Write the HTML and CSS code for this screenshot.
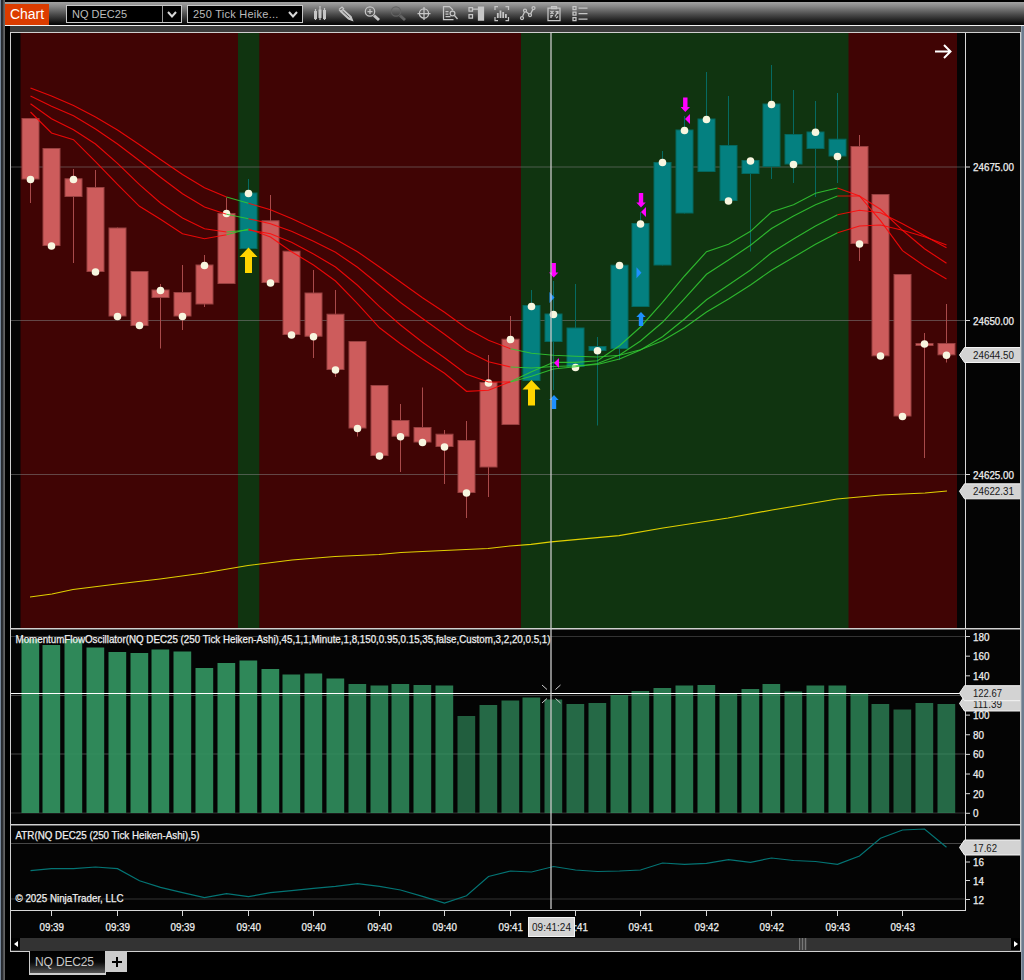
FILE: index.html
```html
<!DOCTYPE html>
<html lang="en">
<head>
  <meta charset="UTF-8">
  <meta name="viewport" content="width=device-width, initial-scale=1.0">
  <title>Chart - NQ DEC25</title>
  <link rel="stylesheet" href="styles.css">
</head>
<body>
  <div class="window">
    <div class="toolbar">
      <div class="app-tab">Chart</div>
      <div class="select instrument">
        <span>NQ DEC25</span>
        <i><svg width="10" height="7" viewBox="0 0 10 7"><path d="M1 1l4 4.5L9 1"/></svg></i>
      </div>
      <div class="select interval">
        <span>250 Tick Heike...</span>
        <i><svg width="10" height="7" viewBox="0 0 10 7"><path d="M1 1l4 4.5L9 1"/></svg></i>
      </div>
      <div class="icons">
        <svg viewBox="0 0 18 18"><path d="M4.500 4v11M9 1v14M13.500 3v12"/><path class="fat" d="M4.500 6v8M9 4.500v8.500M13.500 5v9"/></svg>
        <svg viewBox="0 0 18 18"><path class="solid" d="M6 4.500l8 7 1.500 4-4-1.500-8-7.500z"/><path d="M2 4.500l3-2.500 2 2M2 4.500l2 2"/><path class="cut" d="M5.500 6l7 6.500"/></svg>
        <svg viewBox="0 0 18 18"><circle cx="7" cy="6.500" r="4.700"/><path d="M4.500 6.500h5M7 4v5"/><path class="fat" d="M11 10.500l5 4.500"/></svg>
        <svg class="dim" viewBox="0 0 18 18"><circle cx="7" cy="6.500" r="4.700"/><path class="fat" d="M11 10.500l5 4.500"/></svg>
        <svg viewBox="0 0 18 18"><circle cx="9" cy="8.500" r="4.600"/><path d="M9 2v13M2.500 8.500h13"/></svg>
        <svg viewBox="0 0 18 18"><path d="M12.500 14.500H2.500v-13h6l3 3v1M4.500 6.500h3M4.500 9h3M4.500 11.500h5"/><circle cx="11.500" cy="8.500" r="2.400"/><path d="M13.500 10.500l3 3.500"/></svg>
        <svg viewBox="0 0 18 18"><path class="solid" d="M11.500 2h5v13h-5z"/><path d="M2 2.500h3.500V6H2zM2 9.500h3.500V13H2zM5.500 4h6"/></svg>
        <svg viewBox="0 0 18 18"><path d="M2 5V1.500h3M12.500 1.500h3V5M2 12v3.500h3M12.500 15.500h3V12"/><path class="mid" d="M4.800 8v5M7.500 5.500v7.500M10.200 7v6M12.900 9v4"/></svg>
        <svg viewBox="0 0 18 18"><circle cx="3" cy="13" r="1.500"/><circle cx="6" cy="5.500" r="1.500"/><circle cx="11" cy="10" r="1.500"/><circle cx="14.500" cy="3" r="1.500"/><path d="M3.500 11.500l2-4.500M7 6.500l3 2.500M11.700 8.600l2.200-4.200"/></svg>
        <svg viewBox="0 0 18 18"><path d="M3 3h12v12.500H3zM6.500 1.500h5v2h-5zM5.500 6l3 3M8.500 6l-3 3M10 11.500l3-5M10.500 6.500H13V9M6 13v-2.500h2M11 13l2-1.500"/></svg>
        <svg viewBox="0 0 18 18"><path d="M2 1.500h3v3H2zM2 7h3v3H2zM2 12.500h3v3H2zM7.500 3h9M7.500 8.500h9M7.500 14h9"/></svg>
      </div>
    </div>

    <div class="chart">
      <svg id="price" class="panel price" viewBox="11 33 1009 595"></svg>
      <svg id="osc" class="panel osc" viewBox="11 630 1009 194"></svg>
      <svg id="atr" class="panel atr" viewBox="11 826 1009 84"></svg>
      <svg id="time" class="panel time" viewBox="11 910 1009 28"></svg>
      <svg id="cursor" class="cursor" viewBox="11 33 1009 905"></svg>
      <div class="scrollbar">
        <b><svg width="4" height="6" viewBox="0 0 4 6"><path d="M4 0v6L0 3z"/></svg></b>
        <div class="track"><div class="thumb"></div></div>
        <b><svg width="4" height="6" viewBox="0 0 4 6"><path d="M0 0v6l4-3z"/></svg></b>
      </div>
    </div>

    <div class="tabs">
      <div class="tab">NQ DEC25</div>
      <div class="add"><svg width="10" height="10" viewBox="0 0 10 10"><path d="M5 0v10M0 5h10"/></svg></div>
    </div>
  </div>
  <script src="chart.js"></script>
</body>
</html>
```
FILE: styles.css
```css
body {
  margin: 0;
  background-color: #000;
  font-family: "Liberation Sans", Arial, sans-serif;
}
.window {
  box-sizing: border-box;
  width: 1024px;
  height: 980px;
  padding-left: 5px;
  overflow: hidden;
  background: linear-gradient(90deg, #76869a 0, #76869a 1px, #23272c 1px, #303236 3px, #747474 4px, #555 5px, #000 5px, #000 1021px, #b0b8c0 1021px, #6c7c8e 1022px, #6c7c8e 1024px);
}

/* toolbar */
.toolbar {
  display: flex;
  align-items: center;
  box-sizing: border-box;
  width: 1019px;
  height: 26px;
  padding-top: 3px;
  border-bottom: 1px solid #f2f2f2;
  background: linear-gradient(180deg, #000 0, #000 2px, #a4a4a4 2px, #8a8a8a 6px, #474747 15px, #080808 24px);
}
.app-tab {
  width: 44px;
  height: 21px;
  line-height: 21px;
  text-align: center;
  font-size: 14px;
  color: #fff;
  background-color: #dc3c00;
}
.select {
  display: flex;
  box-sizing: border-box;
  height: 18px;
  border: 1px solid #c8c8c8;
  background-color: #000;
  color: #bcbcbc;
  font-size: 11px;
  line-height: 16px;
  white-space: nowrap;
}
.select span {
  flex: 1;
  padding-left: 5px;
}
.select i {
  display: flex;
  align-items: center;
  justify-content: center;
  width: 18px;
}
.select path {
  fill: none;
  stroke: #d8d8d8;
  stroke-width: 2;
}
.instrument {
  width: 116px;
  margin-left: 17px;
}
.instrument i {
  border-left: 1px solid #999;
}
.interval {
  width: 116px;
  margin-left: 5px;
  letter-spacing: .25px;
}
.icons {
  display: flex;
  gap: 8px;
  margin-left: 8px;
}
.icons svg {
  width: 18px;
  height: 18px;
  fill: none;
  stroke: #c6c6c6;
  stroke-width: 1.25;
}
.icons .fat {
  stroke-width: 3;
}
.icons .mid {
  stroke-width: 1.8;
}
.icons .solid {
  fill: #c6c6c6;
}
.icons .cut {
  stroke: #555;
  stroke-width: 1;
}
.icons .dim {
  stroke: #636363;
}

/* chart */
.chart {
  position: relative;
  width: 1009px;
  margin: 6px 0 0 5px;
  border: 1px solid #d0d0d0;
  background-color: #040404;
  box-shadow: 0 -6px 0 #3c3c3c;
}
.panel {
  display: block;
  width: 1009px;
}
.price { height: 595px; }
.osc { height: 194px; }
.atr { height: 84px; }
.time { height: 28px; }
.osc, .atr {
  border-top: 1px solid #d0d0d0;
  box-shadow: inset 0 1px 0 #666;
}
.osc { padding-top: 1px; }
.atr { padding-top: 1px; }
.cursor {
  position: absolute;
  left: 0;
  top: 0;
  width: 1009px;
  height: 905px;
}
.chart text {
  font-size: 10.5px;
  fill: #f0f0f0;
  stroke: #f0f0f0;
  stroke-width: .25px;
}
.chart .flag-text {
  fill: #181818;
  stroke: none;
}
.zone-down { fill: #400404; }
.zone-up { fill: #103410; }
.grid { stroke: #808080; stroke-opacity: .55; }
.faint { stroke: #333; }
.axis { stroke: #d8d8d8; }
.down rect { fill: #cd5c5c; stroke: #984040; }
.down line { stroke: #a94a4a; }
.up rect { fill: #048080; stroke: #04685e; }
.up line { stroke: #066a62; }
.dot { fill: #f8f6e0; }
.ma, .vwap, .atr-line { fill: none; }
.ma { stroke-width: 1.15; stroke-opacity: .88; }
.ma-down { stroke: #ff0808; }
.ma-up { stroke: #32c832; }
.vwap { stroke: #e0d000; stroke-width: 1.2; }
.atr-line { stroke: #047474; stroke-width: 1.2; }
.gold { fill: #ffd500; }
.magenta { fill: #f0f; }
.blue { fill: #1e90ff; }
.osc-bar { fill: #318f5e; }
.flag { fill: #d3d3d3; stroke: #f4f4f4; }
.cross { stroke: #fff; }
.cross-v { stroke: #c9c9c9; stroke-width: 1.3; }
.cross-x { stroke: #ccc; fill: none; }
.go { fill: none; stroke: #fff; stroke-width: 2; }

.scrollbar {
  display: flex;
  height: 13px;
  background-color: #333;
}
.scrollbar b {
  display: flex;
  align-items: center;
  justify-content: center;
  width: 9px;
  height: 12px;
  background-color: #000;
}
.scrollbar path { fill: #fff; }
.track {
  flex: 1;
}
.thumb {
  width: 8px;
  height: 12px;
  margin-left: 779px;
  background: repeating-linear-gradient(90deg, #777 0, #777 1px, #444 1px, #444 3px);
}

/* bottom tabs */
.tabs {
  display: flex;
  align-items: flex-start;
  margin: -1px 0 0 24px;
  position: relative;
}
.tab {
  box-sizing: border-box;
  width: 77px;
  height: 24px;
  padding-left: 5px;
  border: 1px solid #ccc;
  border-top: none;
  border-bottom-width: 2px;
  background: linear-gradient(180deg, #000 0, #080808 50%, #555 100%);
  color: #c8c8c8;
  font-size: 12px;
  letter-spacing: -.15px;
  line-height: 22px;
  white-space: nowrap;
}
.add {
  display: flex;
  align-items: center;
  justify-content: center;
  width: 21px;
  height: 21px;
  background-color: #ccc;
}
.add path {
  stroke: #000;
  stroke-width: 2;
}
```
FILE: chart.js
```javascript
const STEP = 21.82;
const x = i => Math.floor(30 + STEP * i) + .5;

// [high, top, bottom, low, dot]
const candles = [
  [118, 118, 179.5, 203, 179.5], [148, 148, 246, 246, 246], [169, 178.3, 197, 263, 179.5],
  [170, 187, 272, 272, 272], [227.5, 227.5, 316.5, 316.5, 316.5], [271, 271, 326, 326, 325.5],
  [284, 289.5, 298, 348.5, 290.5], [265, 292, 316.5, 330, 316.5], [255, 264.5, 304.5, 307, 265.5],
  [197.5, 213, 284, 284, 213.5], [179, 192.5, 249, 249, 193.5], [195, 220.3, 283, 283, 283],
  [250.7, 250.7, 335, 335, 335], [270, 292.5, 336.7, 358, 336.7], [290, 313.7, 370, 377, 370],
  [341, 341, 428.5, 436.5, 428.5], [385, 385, 456, 460, 456], [404, 420, 436.7, 472, 436.7],
  [387.5, 427, 442.5, 442.5, 442.5], [430, 433.7, 447, 484, 447], [421, 440, 493, 518, 493],
  [355, 382, 467.5, 497, 383], [316, 338.7, 425, 425, 339.5], [290, 305, 381, 381, 306.5],
  [281, 313.5, 342, 390, 314.5], [284, 327.5, 367, 367, 367.5], [337, 346, 351, 425.5, 350.7],
  [264.7, 264.7, 349, 360, 265.5], [212, 223, 307, 307, 224], [151, 162, 265.5, 265.5, 162.5],
  [116, 129.5, 213.5, 213.5, 130.5], [72, 118.5, 172, 172, 119.5], [96, 145, 201, 201, 201],
  [160, 160, 174, 251.5, 161], [65, 103.5, 167, 179, 104.5], [90, 134, 164.5, 183, 164.5],
  [101, 131.5, 149, 197, 132.3], [93, 138.7, 156.5, 183, 156.5], [135, 146, 244, 261, 244],
  [194, 194, 356.3, 356.3, 356], [274, 274, 416.5, 416.5, 416.5], [333, 343, 346, 458, 344],
  [304, 343, 355.3, 362.5, 355.3]
];
const isUp = i => i === 10 || (i > 22 && i < 38);

const averages = [
  [88, 96, 105.5, 117, 130, 144.7, 159.5, 174.5, 187.7, 197, 203.3, 209.7, 218.5, 228.7, 239.3, 251.7, 267, 282, 297.7, 312.3, 328.3, 340.3, 348.7, 353.3, 355.3, 356.3, 357, 355.3, 349.7, 340.7, 327.7, 312, 299, 285, 270.2, 257.3, 244.3, 232.7, 226, 225, 230.3, 236.7, 245],
  [96, 106.3, 115.7, 129, 144, 160.7, 177.3, 193.7, 207, 214.3, 218.7, 223.7, 231.3, 241.3, 252.3, 267.3, 285.3, 302.5, 318.5, 334.3, 350.7, 361.7, 367, 368, 366.5, 365.8, 364.5, 359, 350, 336.7, 319, 299.7, 285, 270, 252.7, 239, 226, 214.7, 210.3, 212.7, 223.7, 235.7, 247.7],
  [103.7, 118.7, 129.7, 144, 163.3, 184.7, 203, 218, 228.7, 232, 230, 233.7, 242.3, 254, 267, 285.3, 306.7, 325, 342.3, 357.7, 374.3, 382, 382, 376.3, 369, 366.7, 363.5, 355, 341, 322.3, 298.7, 274.3, 260, 245.3, 228.5, 216, 204.7, 196, 196, 209.3, 230.3, 248.7, 263.3],
  [112, 133, 139.7, 161.7, 184.3, 206.3, 219.3, 233.7, 238.7, 234.7, 229, 237, 251.7, 265, 281, 303.7, 327.8, 343.8, 359, 373.3, 391.3, 390.3, 381.7, 371.7, 362.3, 362.3, 360.7, 345.7, 327, 302.3, 276, 251.7, 244.3, 231.3, 212, 204.7, 193.3, 188, 196, 220.7, 250.7, 266, 279]
];
const averageRuns = [[0, 9, 'down'], [9, 10, 'up'], [10, 22, 'down'], [22, 37, 'up'], [37, 42, 'down']];

const vwap = '30,597 52,594 73,589.5 117,584 160,579 204,573 248,565.5 292,560 335,556.5 379,554.5 401,552.5 444,550.5 488,548.5 510,546 531,544.3 551,541.8 619,535.7 663,528 728,518 772,510 837,499 881,495 925,493 947,491';

const oscTops = [639, 645, 639, 647.5, 652, 653, 649.5, 651.5, 668, 663, 660.5, 669, 674.5, 673.5, 678.5, 684, 685.5, 684, 685, 685.5, 716, 705, 700.5, 697.5, 699.5, 704, 703, 695, 691, 688, 685.5, 685, 693, 689, 684, 691.5, 685.5, 685.5, 693, 704, 709.5, 703, 704];

const atr = [870.7, 868.7, 868.7, 867, 868.7, 880.7, 887.3, 892.7, 897.7, 893.7, 896.7, 892.7, 890.7, 888.3, 886.3, 883.7, 886.3, 890, 896.3, 903, 895.7, 876.5, 871, 872, 866.5, 870, 871.5, 871, 870, 863, 864.3, 863.3, 859.7, 862.3, 858, 860.5, 861.5, 864.3, 856, 838.3, 830, 829, 847.3];

function line(x1, y1, x2, y2, cls) {
  return `<line class="${cls}" x1="${x1}" y1="${y1}" x2="${x2}" y2="${y2}"/>`;
}
function text(px, py, str, width, cls = '') {
  return `<text class="${cls}" x="${px}" y="${py}" textLength="${width}" lengthAdjust="spacingAndGlyphs">${str}</text>`;
}
function flag(y, str, width) {
  return `<path class="flag" d="M959.5 ${y}l5-7.500h56v15h-56z"/>` + text(973, y + 4, str, width, 'flag-text');
}
function points(values, from = 0, to = values.length - 1) {
  return values.slice(from, to + 1).map((v, k) => `${x(from + k)},${v}`).join(' ');
}
function label(y, str, width) {
  return line(965, y, 970, y, 'axis') + text(973, y + 4, str, width);
}
// thick arrow pointing up (dir 1) or down (dir -1), tip at cx,y
function arrow(cx, y, half, stem, head, len, dir, cls) {
  return `<path class="${cls}" d="M${cx} ${y}l${half} ${head * dir}h${stem - half}v${(len - head) * dir}h${-2 * stem}v${(head - len) * dir}h${stem - half}z"/>`;
}
function put(id, html) {
  document.getElementById(id).innerHTML = html;
}

// price panel
let out = '<rect class="zone-down" x="20.500" y="33" width="936.500" height="596"/>';
out += '<rect class="zone-up" x="238" y="33" width="21.300" height="596"/>';
out += '<rect class="zone-up" x="521" y="33" width="327.500" height="596"/>';
[[167, '24675.00'], [320.5, '24650.00'], [474.5, '24625.00']].forEach(([y, s]) => {
  out += line(11, y, 965, y, 'grid') + label(y, s, 41);
});
candles.forEach(([high, top, bottom, low], i) => {
  const c = x(i);
  out += `<g class="${isUp(i) ? 'up' : 'down'}">` + line(c, high, c, low, '') +
    `<rect x="${c - 8.5}" y="${top + .5}" width="17" height="${bottom - top - 1}"/></g>`;
});
out += `<polyline class="vwap" points="${vwap}"/>`;
candles.forEach((c, i) => {
  out += `<circle class="dot" cx="${x(i)}" cy="${c[4]}" r="3.800"/>`;
});
averages.forEach(values => averageRuns.forEach(([a, b, dir]) => {
  out += `<polyline class="ma ma-${dir}" points="${points(values, a, b)}"/>`;
}));
out += arrow(248.5, 247.5, 9, 3.5, 9.5, 25.5, 1, 'gold');
out += arrow(531.5, 380, 9, 3.5, 9.5, 25.5, 1, 'gold');
[[553.7, 277.5], [641, 207.5], [685.3, 112]].forEach(([cx, y]) => {
  out += arrow(cx, y, 4.7, 2.2, 5, 14.5, -1, 'magenta');
});
[[554, 395], [641, 312]].forEach(([cx, y]) => {
  out += arrow(cx, y, 4.7, 2.2, 5, 14, 1, 'blue');
});
[[554, 363], [641, 212], [685, 119]].forEach(([px, y]) => {
  out += `<path class="magenta" d="M${px} ${y}l5-5v10z"/>`;
});
[[549.5, 297.5], [636.5, 272.7]].forEach(([px, y]) => {
  out += `<path class="blue" d="M${px} ${y - 5.5}l5 5.500l-5 5.500z"/>`;
});
out += line(965.5, 33, 965.5, 629, 'axis');
out += flag(355, '24644.50', 41) + flag(491.3, '24622.31', 41);
out += '<path class="go" d="M935 51.500h16M944 45l6.500 6.500l-6.500 6.500"/>';
put('price', out);

// oscillator panel
out = line(11, 636.5, 965, 636.5, 'faint') + line(11, 695.5, 965, 695.5, 'grid') +
  line(11, 754, 965, 754, 'grid') + line(11, 813, 965, 813, 'faint');
oscTops.forEach((y, i) => {
  const alpha = y < 670 ? .95 : y < 680 ? .9 : y < 690 ? .84 : y < 698 ? .78 : y < 707 ? .73 : .65;
  out += `<rect class="osc-bar" x="${x(i) - 9}" y="${y}" width="17.700" height="${813 - y}" fill-opacity="${alpha}"/>`;
});
for (let v = 0; v <= 180; v += 20) {
  if (v !== 120) out += label(813.3 - v * .982, String(v), v > 99 ? 16.5 : v ? 11 : 5.5);
}
out += text(15.5, 643, 'MomentumFlowOscillator(NQ DEC25 (250 Tick Heiken-Ashi),45,1,1,Minute,1,8,150,0.95,0.15,35,false,Custom,3,2,20,0.5,1)', 535);
out += line(965.5, 629, 965.5, 825, 'axis');
out += flag(703.5, '111.39', 29);
put('osc', out);

// ATR panel
out = line(11, 843.5, 965, 843.5, 'grid') + line(11, 899, 965, 899, 'faint');
out += `<polyline class="atr-line" points="${points(atr)}"/>`;
out += label(862, '16', 11) + label(880.5, '14', 11) + label(899.5, '12', 11);
out += text(15.5, 838.5, 'ATR(NQ DEC25 (250 Tick Heiken-Ashi),5)', 184);
out += text(15.5, 901.5, '© 2025 NinjaTrader, LLC', 108);
out += line(965.5, 825, 965.5, 911, 'axis') + flag(847.5, '17.62', 24);
put('atr', out);

// time axis
out = line(11, 910.5, 966, 910.5, 'axis');
['39', '39', '39', '40', '40', '40', '40', '41', '41', '41', '42', '42', '43', '43'].forEach((m, k) => {
  const c = x(1 + 3 * k);
  out += line(c, 911, c, 916, 'axis') + text(c - 12, 931, '09:' + m, 24.5);
});
put('time', out);

// crosshair
out = line(11, 693.5, 960, 693.5, 'cross') + line(551, 33, 551, 909, 'cross-v');
out += '<path class="cross-x" d="M542 685l5 4.500M560.500 685l-5 4.500M542 703l5-4.500M560.500 703l-5-4.500"/>';
out += flag(693.2, '122.67', 29);
out += '<rect class="flag" x="528.500" y="917.500" width="46" height="19"/>' + text(532, 931, '09:41:24', 39, 'flag-text');
put('cursor', out);
```
